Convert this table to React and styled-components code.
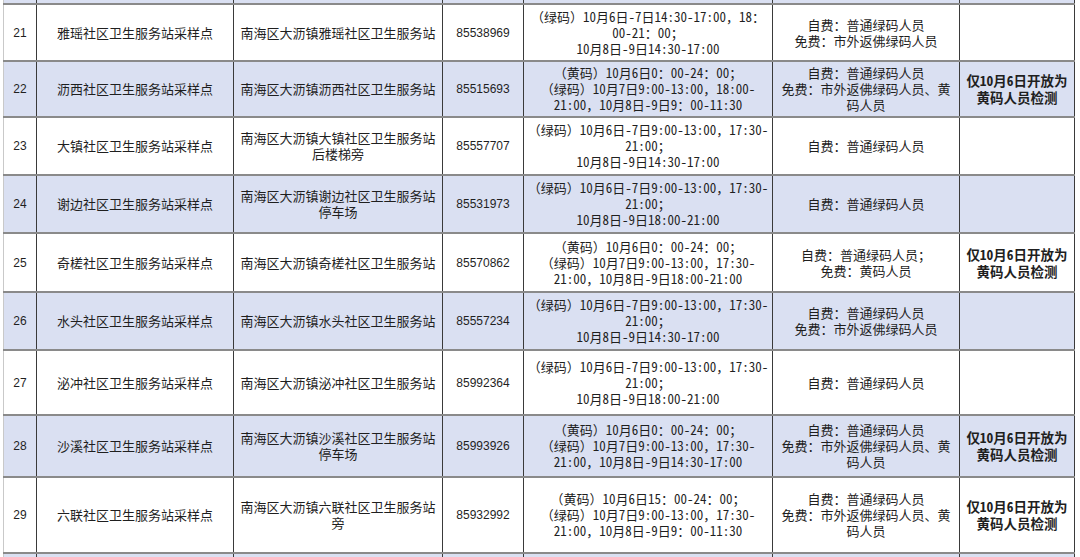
import React from 'react'
import styled, { createGlobalStyle } from 'styled-components'

const GlobalStyle = createGlobalStyle`
  html, body {
    margin: 0;
    padding: 0;
    background: #ffffff;
  }
  body {
    font-family: "Noto Sans CJK SC", "Liberation Sans", sans-serif;
    color: #1f1f1f;
  }
`

const NOTE = ['仅10月6日开放为', '黄码人员检测']

const rows = [
  {
    no: '21', h: 57, shade: false,
    name: '雅瑶社区卫生服务站采样点',
    addr: ['南海区大沥镇雅瑶社区卫生服务站'],
    phone: '85538969',
    time: ['（绿码）10月6日-7日14:30-17:00，18：', '00-21：00；', '10月8日-9日14:30-17:00'],
    fee: ['自费：普通绿码人员', '免费：市外返佛绿码人员'],
  },
  {
    no: '22', h: 56, shade: true,
    name: '沥西社区卫生服务站采样点',
    addr: ['南海区大沥镇沥西社区卫生服务站'],
    phone: '85515693',
    time: ['（黄码）10月6日0：00-24：00；', '（绿码）10月7日9:00-13:00，18:00-', '21:00，10月8日-9日9：00-11:30'],
    fee: ['自费：普通绿码人员', '免费：市外返佛绿码人员、黄', '码人员'],
    note: NOTE,
  },
  {
    no: '23', h: 58, shade: false,
    name: '大镇社区卫生服务站采样点',
    addr: ['南海区大沥镇大镇社区卫生服务站', '后楼梯旁'],
    phone: '85557707',
    time: ['（绿码）10月6日-7日9:00-13:00，17:30-', '21:00；', '10月8日-9日14:30-17:00'],
    fee: ['自费：普通绿码人员'],
  },
  {
    no: '24', h: 58, shade: true,
    name: '谢边社区卫生服务站采样点',
    addr: ['南海区大沥镇谢边社区卫生服务站', '停车场'],
    phone: '85531973',
    time: ['（绿码）10月6日-7日9:00-13:00，17:30-', '21:00；', '10月8日-9日18:00-21:00'],
    fee: ['自费：普通绿码人员'],
  },
  {
    no: '25', h: 59, shade: false,
    name: '奇槎社区卫生服务站采样点',
    addr: ['南海区大沥镇奇槎社区卫生服务站'],
    phone: '85570862',
    time: ['（黄码）10月6日0：00-24：00；', '（绿码）10月7日9:00-13:00，17:30-', '21:00，10月8日-9日18:00-21:00'],
    fee: ['自费：普通绿码人员；', '免费：黄码人员'],
    note: NOTE,
  },
  {
    no: '26', h: 58, shade: true,
    name: '水头社区卫生服务站采样点',
    addr: ['南海区大沥镇水头社区卫生服务站'],
    phone: '85557234',
    time: ['（绿码）10月6日-7日9:00-13:00，17:30-', '21:00；', '10月8日-9日14:30-17:00'],
    fee: ['自费：普通绿码人员', '免费：市外返佛绿码人员'],
  },
  {
    no: '27', h: 65, shade: false,
    name: '泌冲社区卫生服务站采样点',
    addr: ['南海区大沥镇泌冲社区卫生服务站'],
    phone: '85992364',
    time: ['（绿码）10月6日-7日9:00-13:00，17:30-', '21:00；', '10月8日-9日18:00-21:00'],
    fee: ['自费：普通绿码人员'],
  },
  {
    no: '28', h: 62, shade: true,
    name: '沙溪社区卫生服务站采样点',
    addr: ['南海区大沥镇沙溪社区卫生服务站', '停车场'],
    phone: '85993926',
    time: ['（黄码）10月6日0：00-24：00；', '（绿码）10月7日9:00-13:00，17:30-', '21:00，10月8日-9日14:30-17:00'],
    fee: ['自费：普通绿码人员', '免费：市外返佛绿码人员、黄', '码人员'],
    note: NOTE,
  },
  {
    no: '29', h: 76, shade: false,
    name: '六联社区卫生服务站采样点',
    addr: ['南海区大沥镇六联社区卫生服务站', '旁'],
    phone: '85932992',
    time: ['（黄码）10月6日15：00-24：00；', '（绿码）10月7日9:00-13:00，17:30-', '21:00，10月8日-9日9：00-11:30'],
    fee: ['自费：普通绿码人员', '免费：市外返佛绿码人员、黄', '码人员'],
    note: NOTE,
  },
]

const Lines = ({ lines }) =>
  (lines || []).map((l, i) => <Line key={i}>{l}</Line>)

const EmptyRow = ({ h }) => (
  <Row $h={h} $shade>
    {Array.from({ length: 7 }).map((_, i) => (
      <Cell key={i} $first={i === 0} />
    ))}
  </Row>
)

const App = () => (
  <>
    <GlobalStyle />
    <Page>
      <Sheet>
        <EmptyRow h={5} />
        {rows.map((r) => (
          <Row key={r.no} $h={r.h} $shade={r.shade}>
            <Cell $first $kind="num">{r.no}</Cell>
            <Cell>{r.name}</Cell>
            <Cell><Lines lines={r.addr} /></Cell>
            <Cell $kind="num">{r.phone}</Cell>
            <Cell $kind="time"><Lines lines={r.time} /></Cell>
            <Cell><Lines lines={r.fee} /></Cell>
            <Cell $kind="note"><Lines lines={r.note} /></Cell>
          </Row>
        ))}
        <EmptyRow h={10} />
      </Sheet>
    </Page>
  </>
)

export default App

const Page = styled.div`
  width: 1080px;
  height: 557px;
  overflow: hidden;
  padding-left: 3px;
  box-sizing: border-box;
  background: #ffffff;
`

const Sheet = styled.div`
  width: 1072px;
`

const Row = styled.div`
  display: grid;
  grid-template-columns: 34px 197px 209px 81px 249px 187px 115px;
  height: ${(p) => p.$h}px;
  box-sizing: border-box;
  border-bottom: 2px solid #8a8a8a;
  background: ${(p) => (p.$shade ? '#dae0f2' : '#ffffff')};
`

const fonts = {
  num: `
    font-family: "Liberation Sans", Arial, sans-serif;
    font-size: 12px;
  `,
  time: `
    font-family: "Noto Sans Mono CJK SC", "Noto Sans CJK SC", "Liberation Sans", monospace;
    font-size: 13px;
  `,
  note: `
    font-family: "Noto Sans Mono CJK SC", "Noto Sans CJK SC", sans-serif;
    font-size: 13.5px;
    font-weight: 700;
    line-height: 17px;
  `,
}

const Cell = styled.div`
  display: flex;
  flex-direction: column;
  align-items: center;
  justify-content: center;
  box-sizing: border-box;
  border-right: 1px solid #3a3a3a;
  border-left: ${(p) => (p.$first ? '1px solid #c9c9c9' : 'none')};
  font-family: "Noto Sans CJK SC", sans-serif;
  font-size: 13px;
  line-height: 16px;
  text-align: center;
  white-space: nowrap;
  ${(p) => fonts[p.$kind] || ''}
`

const Line = styled.span`
  display: block;
`
